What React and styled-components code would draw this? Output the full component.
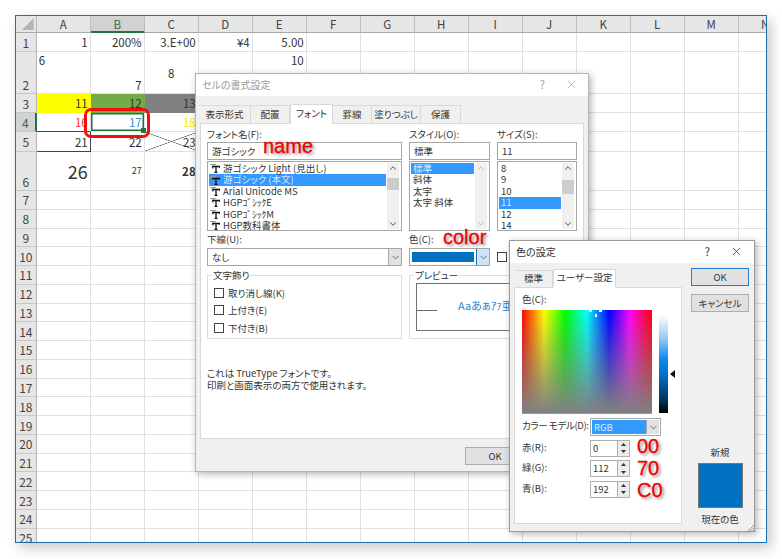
import styled, { createGlobalStyle } from "styled-components";
import { ChevronDown, ChevronUp, X } from "lucide-react";

const UI_FONT = `"Noto Sans CJK JP", "Noto Sans", sans-serif`;

const GlobalStyle = createGlobalStyle`
  html, body { margin: 0; padding: 0; background: #fff; }
  * { box-sizing: border-box; }
  body { font-family: ${UI_FONT}; }
`;

const Page = styled.div`
  position: relative;
  width: 782px;
  height: 559px;
  padding: 15px;
  overflow: hidden;
  background: #fff;
`;

const Sheet = styled.div`
  width: 752px;
  height: 528px;
  border: 1px solid #1b6fb5;
  overflow: hidden;
  background: #fff;
  box-shadow: 4px 5px 12px rgba(0, 0, 0, 0.22);
`;

const SheetGrid = styled.div`
  display: grid;
  grid-template-columns: 20.7px repeat(14, 54px);
  grid-template-rows: 17.3px 19px 42px 18.8px 19.2px 19.7px 39px repeat(19, 18.77px);
  width: max-content;
  font-size: 11.5px;
  color: #333;
`;

const Corner = styled.div`
  position: relative;
  background: #e6e6e6;
  border-right: 1px solid #b5b5b5;
  border-bottom: 1px solid #a8a8a8;
  &::after {
    content: "";
    position: absolute;
    right: 2px;
    bottom: 2px;
    width: 12px;
    height: 12px;
    background: #b4b4b4;
    clip-path: polygon(100% 0, 100% 100%, 0 100%);
  }
`;

const ColHead = styled.div`
  display: flex;
  align-items: center;
  justify-content: center;
  background: ${(p) => (p.$active ? "#d2d2d2" : "#e6e6e6")};
  color: ${(p) => (p.$active ? "#217346" : "#444")};
  border-right: 1px solid #bdbdbd;
  border-bottom: ${(p) => (p.$active ? "2px solid #217346" : "1px solid #a8a8a8")};
`;

const RowHead = styled.div`
  display: flex;
  align-items: ${(p) => (p.$bottom ? "flex-end" : "center")};
  justify-content: center;
  background: ${(p) => (p.$active ? "#d2d2d2" : "#e6e6e6")};
  color: ${(p) => (p.$active ? "#217346" : "#444")};
  border-right: ${(p) => (p.$active ? "2px solid #217346" : "1px solid #b5b5b5")};
  border-bottom: 1px solid #c8c8c8;
  font-size: 12px;
  overflow: hidden;
`;

const Cell = styled.div`
  position: relative;
  display: flex;
  justify-content: ${(p) => p.$h || "flex-end"};
  align-items: ${(p) => p.$v || "center"};
  padding: 0 2px;
  background-color: ${(p) => p.$bg || "#fff"};
  color: ${(p) => p.$color || "#333"};
  font-size: ${(p) => p.$size || 11.5}px;
  font-weight: ${(p) => (p.$bold ? 700 : 400)};
  border-right: 1px solid ${(p) => p.$edgeRight || "#e0e0e0"};
  border-bottom: 1px solid ${(p) => p.$edgeBottom || "#e0e0e0"};
  ${(p) =>
    p.$cross &&
    `background-image:
      linear-gradient(to top right, transparent calc(50% - 0.6px), #555 50%, transparent calc(50% + 0.6px)),
      linear-gradient(to bottom right, transparent calc(50% - 0.6px), #555 50%, transparent calc(50% + 0.6px));`}
  ${(p) =>
    p.$selected &&
    `box-shadow: inset 0 0 0 1.5px #217346;
     &::after {
       content: "";
       position: absolute;
       right: -2px;
       bottom: -2px;
       width: 5px;
       height: 5px;
       background: #217346;
       z-index: 1;
     }`}
`;

const Callout = styled.div`
  position: absolute;
  left: 84px;
  top: 108px;
  width: 66px;
  height: 30px;
  border: 3px solid #f01010;
  border-radius: 7px;
`;

const Note = styled.span`
  position: absolute;
  left: ${(p) => p.$x}px;
  top: ${(p) => p.$y}px;
  font-family: "Liberation Sans", Arial, sans-serif;
  font-size: ${(p) => p.$size || 20}px;
  line-height: 1;
  color: #f00000;
  -webkit-text-stroke: 0.3px #f00000;
  text-shadow: 2px 2px 3px rgba(0, 0, 0, 0.45);
  z-index: 5;
`;

const Dialog = styled.div`
  position: absolute;
  left: ${(p) => p.$x}px;
  top: ${(p) => p.$y}px;
  width: ${(p) => p.$w}px;
  height: ${(p) => p.$h}px;
  background: #f0f0f0;
  border: 1px solid ${(p) => p.$edge};
  box-shadow: 2px 2px 7px rgba(0, 0, 0, 0.3);
  font-size: 9.5px;
  font-feature-settings: "palt";
  line-height: 1.1;
  color: #333;
  display: flex;
  flex-direction: column;
`;

const TitleBar = styled.div`
  flex: none;
  height: 22px;
  display: flex;
  align-items: center;
  padding: 0 ${(p) => p.$padRight}px 2px 6px;
  background: #fff;
  font-size: 10px;
  color: ${(p) => (p.$inactive ? "#9a9a9a" : "#333")};
`;

const TitleText = styled.span`
  flex: 1;
`;

const TitleHelp = styled.span`
  margin-right: 20px;
  font-size: 11px;
`;

const Tabs = styled.div`
  display: flex;
  align-items: flex-end;
  height: ${(p) => p.$h}px;
  padding-left: ${(p) => p.$pad}px;
`;

const Tab = styled.div`
  width: ${(p) => p.$w}px;
  height: ${(p) => (p.$active ? p.$tall : p.$tall - 2)}px;
  padding-bottom: ${(p) => (p.$active ? 2 : 1)}px;
  display: flex;
  align-items: center;
  justify-content: center;
  background: ${(p) => (p.$active ? "#fff" : "#f0f0f0")};
  border: 1px solid #d9d9d9;
  border-bottom: ${(p) => (p.$active ? "1px solid #fff" : "none")};
  border-left: ${(p) => (p.$active ? "1px solid #d9d9d9" : "none")};
  margin-bottom: ${(p) => (p.$active ? -1 : 0)}px;
  position: relative;
  z-index: ${(p) => (p.$active ? 1 : 0)};
`;

const FontPanel = styled.div`
  width: 384px;
  height: 316px;
  margin-left: 4px;
  padding: 0 6px;
  background: #fff;
  border: 1px solid #d9d9d9;
  display: grid;
  grid-template-columns: 195px 81px 80px;
  grid-template-rows: 106px 36px 73px auto;
  column-gap: 7px;
`;

const Label = styled.div`
  height: ${(p) => p.$h || 18}px;
  display: flex;
  align-items: center;
  padding-top: ${(p) => p.$top || 0}px;
`;

const TextBox = styled.div`
  height: 18px;
  padding: 0 4px;
  display: flex;
  align-items: center;
  background: #fff;
  border: 1px solid #a6a6a6;
`;

const ListBox = styled.div`
  height: 70px;
  margin-top: 1px;
  padding: 1px;
  display: flex;
  background: #fff;
  border: 1px solid #a6a6a6;
`;

const ListItems = styled.div`
  flex: 1;
  min-width: 0;
`;

const ListItem = styled.div`
  height: 11.4px;
  line-height: 11.4px;
  margin-right: 1px;
  padding-left: ${(p) => p.$pad ?? 1}px;
  display: flex;
  align-items: center;
  gap: 3px;
  white-space: nowrap;
  background: ${(p) => (p.$on ? "#3399ff" : "transparent")};
  color: ${(p) => (p.$on ? "#d5e9ff" : "#333")};
`;

const ScrollTrack = styled.div`
  flex: none;
  width: 12px;
  margin-right: 1px;
  display: flex;
  flex-direction: column;
  align-items: center;
  background: #f0f0f0;
  color: ${(p) => (p.$off ? "#b5b5b5" : "#444")};
`;

const ScrollSpace = styled.div`
  flex: 1;
  width: 100%;
  padding-top: ${(p) => p.$top}px;
`;

const ScrollThumb = styled.div`
  height: ${(p) => p.$h}px;
  background: #cdcdcd;
`;

const Combo = styled.div`
  height: 18px;
  display: flex;
  align-items: stretch;
  background: #fff;
  border: 1px solid #a6a6a6;
`;

const ComboValue = styled.div`
  flex: 1;
  display: flex;
  align-items: center;
  padding-left: 4px;
`;

const ComboButton = styled.div`
  width: 13px;
  display: flex;
  align-items: center;
  justify-content: center;
  background: ${(p) => (p.$focus ? "#cce4f7" : "#e1e1e1")};
  border-left: 1px solid ${(p) => (p.$focus ? "#1d6fae" : "#a6a6a6")};
  color: #444;
`;

const ColorFill = styled.div`
  flex: 1;
  margin: 3px 2px;
  background: #0070c0;
`;

const CheckBox = styled.span`
  display: inline-block;
  flex: none;
  width: 10px;
  height: 10px;
  background: #fff;
  border: 1px solid #444;
`;

const ColorRow = styled.div`
  display: flex;
  align-items: center;
  height: 18px;
`;

const Group = styled.fieldset`
  margin: 2px 0 0;
  padding: 2px 0 0 6px;
  height: 71px;
  min-width: 0;
  border: 1px solid #dcdcdc;
  grid-column: ${(p) => p.$span || "auto"};
  overflow: hidden;
  legend {
    margin-left: -2px;
    padding: 0 1px;
    height: 14px;
    line-height: 14px;
  }
`;

const CheckLine = styled.div`
  height: 17.5px;
  display: flex;
  align-items: center;
  gap: 4px;
`;

const PreviewBox = styled.div`
  position: relative;
  height: 48px;
  margin-top: -1px;
  margin-right: 6px;
  padding: 0 0 4px 41px;
  display: flex;
  align-items: center;
  border: 1px solid #707070;
  color: #2f86cc;
  font-size: 11px;
  white-space: nowrap;
`;

const PreviewLine = styled.div`
  position: absolute;
  left: 0;
  top: 26px;
  width: 20px;
  height: 1px;
  background: #666;
`;

const InfoText = styled.div`
  grid-column: 1 / -1;
  padding-top: 29px;
  line-height: 11.5px;
`;

const FooterRow = styled.div`
  display: flex;
  padding: 8px 0 0 269px;
`;

const Button = styled.div`
  width: ${(p) => p.$w || 58}px;
  height: 18px;
  flex: none;
  display: flex;
  align-items: center;
  justify-content: center;
  background: #e1e1e1;
  border: ${(p) => (p.$primary ? "1.5px solid #1d7fd6" : "1px solid #adadad")};
`;

const ColorBody = styled.div`
  flex: 1;
  display: flex;
  padding-left: 4px;
`;

const ColorLeft = styled.div`
  width: 168px;
  padding-top: 5px;
`;

const ColorPanel = styled.div`
  height: 237px;
  padding: 0 0 0 7px;
  background: #fff;
  border: 1px solid #d9d9d9;
`;

const PickerRow = styled.div`
  display: flex;
  gap: 7px;
`;

const Picker = styled.div`
  position: relative;
  width: 130px;
  height: 104px;
  background:
    linear-gradient(to bottom, rgba(128, 128, 128, 0) 0%, rgba(128, 128, 128, 1) 100%),
    linear-gradient(to right, #f00 0%, #ff0 17%, #0f0 33%, #0ff 50%, #00f 67%, #f0f 83%, #f00 100%);
  border-bottom: 1px solid #999;
`;

const CrossMark = styled.span`
  position: absolute;
  left: ${(p) => p.$x}px;
  top: ${(p) => p.$y}px;
  width: ${(p) => p.$w}px;
  height: ${(p) => p.$h}px;
  background: #fff;
`;

const LumBar = styled.div`
  position: relative;
  width: 9px;
  height: 98px;
  margin-top: 5px;
  background: linear-gradient(to bottom, #fff 0%, #8cc8f5 25%, #0a8aea 45%, #0070c0 62%, #003a66 85%, #000 100%);
  &::after {
    content: "";
    position: absolute;
    left: 11px;
    top: 55px;
    border-style: solid;
    border-width: 4px 5px 4px 0;
    border-color: transparent #111 transparent transparent;
  }
`;

const FormRow = styled.div`
  display: grid;
  grid-template-columns: 68px auto;
  align-items: start;
  height: ${(p) => p.$h}px;
  margin-top: ${(p) => p.$top}px;
`;

const FieldLabel = styled.div`
  line-height: 15px;
  white-space: nowrap;
  letter-spacing: ${(p) => (p.$tight ? "-0.4px" : "0")};
`;

const ModelSelect = styled.div`
  width: 71px;
  height: 18px;
  padding: 1px;
  display: flex;
  background: #fff;
  border: 1px solid #a6a6a6;
`;

const ModelValue = styled.div`
  flex: 1;
  display: flex;
  align-items: center;
  padding-left: 2px;
  background: #3399ff;
  color: #d5e9ff;
`;

const Spin = styled.div`
  width: 40px;
  height: 17px;
  display: flex;
  background: #fff;
  border: 1px solid #b0b0b0;
`;

const SpinValue = styled.div`
  flex: 1;
  display: flex;
  align-items: center;
  padding-left: 2px;
`;

const SpinButtons = styled.div`
  width: 12px;
  display: flex;
  flex-direction: column;
  border-left: 1px solid #b0b0b0;
`;

const SpinArrow = styled.div`
  flex: 1;
  display: flex;
  align-items: center;
  justify-content: center;
  background: #ececec;
  color: #333;
`;

const ColorRight = styled.div`
  flex: 1;
  padding: 5px 0 0 9px;
  display: flex;
  flex-direction: column;
  align-items: flex-start;
  gap: 8px;
`;

const SwatchCol = styled.div`
  width: 58px;
  margin-top: 127px;
  display: flex;
  flex-direction: column;
  align-items: center;
`;

const Swatch = styled.div`
  width: 45px;
  height: 45px;
  margin: 6px 0 6px;
  background: #0070c0;
  border: 1px solid #777;
`;

const Grip = styled.svg`
  position: absolute;
  right: 0;
  bottom: 0;
`;

const COLS = "ABCDEFGHIJKLMN".split("");

// row -> column -> cell settings
const CELLS = {
  1: {
    A: { text: "1" },
    B: { text: "200%" },
    C: { text: "3.E+00" },
    D: { text: "¥4" },
    E: { text: "5.00" },
  },
  2: {
    A: { text: "6", $h: "flex-start", $v: "flex-start" },
    B: { text: "7", $v: "flex-end" },
    C: { text: "8", $h: "center" },
    E: { text: "10", $v: "flex-start" },
  },
  3: {
    A: { text: "11", $bg: "#ffff00", $edgeRight: "#ffff00", $edgeBottom: "#ffff00" },
    B: { text: "12", $bg: "#70ad47", $edgeRight: "#70ad47", $edgeBottom: "#70ad47" },
    C: { text: "13", $bg: "#808080", $edgeRight: "#808080", $edgeBottom: "#808080" },
  },
  4: {
    A: { text: "16", $color: "#ff3030", $edgeBottom: "#444" },
    B: { text: "17", $color: "#3a8fd0", $selected: true },
    C: { text: "18", $color: "#f0f000" },
  },
  5: {
    A: { text: "21", $edgeRight: "#444", $edgeBottom: "#444" },
    B: { text: "22" },
    C: { text: "23", $cross: true },
  },
  6: {
    A: { text: "26", $size: 18 },
    B: { text: "27", $size: 9 },
    C: { text: "28", $bold: true },
  },
};

const FONT_TABS = [
  ["表示形式", 52],
  ["配置", 39],
  ["フォント", 43],
  ["罫線", 39],
  ["塗りつぶし", 49],
  ["保護", 40],
];

const FONT_NAMES = [
  "游ゴシック Light (見出し)",
  "游ゴシック (本文)",
  "Arial Unicode MS",
  "HGPｺﾞｼｯｸE",
  "HGPｺﾞｼｯｸM",
  "HGP教科書体",
];

const RGB_ROWS = [
  ["赤(R):", "0"],
  ["緑(G):", "112"],
  ["青(B):", "192"],
];

function TrueTypeIcon() {
  return (
    <svg width="10" height="9" viewBox="0 0 10 9" style={{ flex: "none" }}>
      <path d="M0 0.5H6M3 0.5V5" stroke="#999" strokeWidth="1.2" fill="none" />
      <path d="M2.5 2.5H9.5V3.8M2.5 2.5V3.8M6 2.5V8.5M4.5 8.5H7.5" stroke="#111" strokeWidth="1.3" fill="none" />
    </svg>
  );
}

function Scroller({ thumb, top, off }) {
  return (
    <ScrollTrack $off={off}>
      <ChevronUp size={10} strokeWidth={2.2} />
      <ScrollSpace $top={top}>{thumb && <ScrollThumb $h={thumb} />}</ScrollSpace>
      <ChevronDown size={10} strokeWidth={2.2} />
    </ScrollTrack>
  );
}

function SpinTriangle({ down }) {
  return (
    <svg width="5" height="3" viewBox="0 0 5 3">
      <path d={down ? "M0 0H5L2.5 3Z" : "M0 3H5L2.5 0Z"} fill="currentColor" />
    </svg>
  );
}

function Worksheet() {
  const rows = Array.from({ length: 25 }, (_, i) => i + 1);
  return (
    <Sheet>
      <SheetGrid>
        <Corner />
        {COLS.map((c) => (
          <ColHead key={c} $active={c === "B"}>
            {c}
          </ColHead>
        ))}
        {rows.map((r) => [
          <RowHead key={`h${r}`} $active={r === 4} $bottom={r === 2 || r === 6}>
            {r}
          </RowHead>,
          ...COLS.map((c) => {
            const { text, ...look } = CELLS[r]?.[c] || {};
            return (
              <Cell key={`${c}${r}`} {...look}>
                {text}
              </Cell>
            );
          }),
        ])}
      </SheetGrid>
    </Sheet>
  );
}

function FontDialog() {
  return (
    <Dialog $x={195} $y={73} $w={394} $h={399} $edge="#b5b5b5">
      <TitleBar $inactive $padRight={10}>
        <TitleText>セルの書式設定</TitleText>
        <TitleHelp>?</TitleHelp>
        <X size={13} strokeWidth={1.2} />
      </TitleBar>
      <Tabs $h={27} $pad={3}>
        {FONT_TABS.map(([name, w]) => (
          <Tab key={name} $w={w} $tall={20} $active={name === "フォント"}>
            {name}
          </Tab>
        ))}
      </Tabs>
      <FontPanel>
        <div>
          <Label $h={18} $top={2}>フォント名(F):</Label>
          <TextBox>游ゴシック</TextBox>
          <ListBox>
            <ListItems>
              {FONT_NAMES.map((name, i) => (
                <ListItem key={name} $on={i === 1}>
                  <TrueTypeIcon />
                  {name}
                </ListItem>
              ))}
            </ListItems>
            <Scroller thumb={12} top={5} />
          </ListBox>
        </div>
        <div>
          <Label $h={18} $top={2}>スタイル(O):</Label>
          <TextBox>標準</TextBox>
          <ListBox>
            <ListItems>
              {["標準", "斜体", "太字", "太字 斜体"].map((name, i) => (
                <ListItem key={name} $on={i === 0} $pad={2}>
                  {name}
                </ListItem>
              ))}
            </ListItems>
            <Scroller off />
          </ListBox>
        </div>
        <div>
          <Label $h={18} $top={2}>サイズ(S):</Label>
          <TextBox>11</TextBox>
          <ListBox>
            <ListItems>
              {["8", "9", "10", "11", "12", "14"].map((name) => (
                <ListItem key={name} $on={name === "11"} $pad={2}>
                  {name}
                </ListItem>
              ))}
            </ListItems>
            <Scroller thumb={14} top={7} />
          </ListBox>
        </div>

        <div>
          <Label>下線(U):</Label>
          <Combo>
            <ComboValue>なし</ComboValue>
            <ComboButton>
              <ChevronDown size={11} strokeWidth={1.6} />
            </ComboButton>
          </Combo>
        </div>
        <div>
          <Label>色(C):</Label>
          <Combo>
            <ColorFill />
            <ComboButton $focus>
              <ChevronDown size={11} strokeWidth={1.6} />
            </ComboButton>
          </Combo>
        </div>
        <div>
          <Label />
          <ColorRow>
            <CheckBox />
          </ColorRow>
        </div>

        <Group>
          <legend>文字飾り</legend>
          <CheckLine>
            <CheckBox />
            取り消し線(K)
          </CheckLine>
          <CheckLine>
            <CheckBox />
            上付き(E)
          </CheckLine>
          <CheckLine>
            <CheckBox />
            下付き(B)
          </CheckLine>
        </Group>
        <Group $span="2 / span 2">
          <legend>プレビュー</legend>
          <PreviewBox>
            <PreviewLine />
            Aaあぁｱｧ亜Ａａ
          </PreviewBox>
        </Group>

        <InfoText>
          これは TrueType フォントです。
          <br />
          印刷と画面表示の両方で使用されます。
        </InfoText>
      </FontPanel>
      <FooterRow>
        <Button $w={60}>OK</Button>
      </FooterRow>
    </Dialog>
  );
}

function ColorDialog() {
  return (
    <Dialog $x={509} $y={240} $w={246} $h={292} $edge="#9a9a9a">
      <TitleBar $padRight={11}>
        <TitleText>色の設定</TitleText>
        <TitleHelp>?</TitleHelp>
        <X size={13} strokeWidth={1.4} />
      </TitleBar>
      <ColorBody>
        <ColorLeft>
          <Tabs $h={19} $pad={1}>
            <Tab $w={38} $tall={19}>標準</Tab>
            <Tab $w={63} $tall={19} $active>ユーザー設定</Tab>
          </Tabs>
          <ColorPanel>
            <Label $h={22}>色(C):</Label>
            <PickerRow>
              <Picker>
                <CrossMark $x={67} $y={0} $w={3} $h={2} />
                <CrossMark $x={77} $y={0} $w={3} $h={2} />
                <CrossMark $x={73} $y={4} $w={2} $h={3} />
              </Picker>
              <LumBar />
            </PickerRow>
            <FormRow $h={18} $top={4}>
              <FieldLabel $tight>カラー モデル(D):</FieldLabel>
              <ModelSelect>
                <ModelValue>RGB</ModelValue>
                <ComboButton>
                  <ChevronDown size={11} strokeWidth={1.6} />
                </ComboButton>
              </ModelSelect>
            </FormRow>
            {RGB_ROWS.map(([label, value]) => (
              <FormRow key={label} $h={17} $top={3.5}>
                <FieldLabel>{label}</FieldLabel>
                <Spin>
                  <SpinValue>{value}</SpinValue>
                  <SpinButtons>
                    <SpinArrow>
                      <SpinTriangle />
                    </SpinArrow>
                    <SpinArrow>
                      <SpinTriangle down />
                    </SpinArrow>
                  </SpinButtons>
                </Spin>
              </FormRow>
            ))}
          </ColorPanel>
        </ColorLeft>
        <ColorRight>
          <Button $primary>OK</Button>
          <Button>キャンセル</Button>
          <SwatchCol>
            新規
            <Swatch />
            現在の色
          </SwatchCol>
        </ColorRight>
      </ColorBody>
      <Grip width="6" height="6" viewBox="0 0 6 6">
        <path d="M0 6L6 0M2.5 6L6 2.5M5 6L6 5" stroke="#999" strokeWidth="1" />
      </Grip>
    </Dialog>
  );
}

export default function App() {
  return (
    <Page>
      <GlobalStyle />
      <Worksheet />
      <Callout />
      <FontDialog />
      <ColorDialog />
      <Note $x={263} $y={136}>name</Note>
      <Note $x={443} $y={227}>color</Note>
      <Note $x={637} $y={436}>00</Note>
      <Note $x={637} $y={458}>70</Note>
      <Note $x={637} $y={480}>C0</Note>
    </Page>
  );
}
